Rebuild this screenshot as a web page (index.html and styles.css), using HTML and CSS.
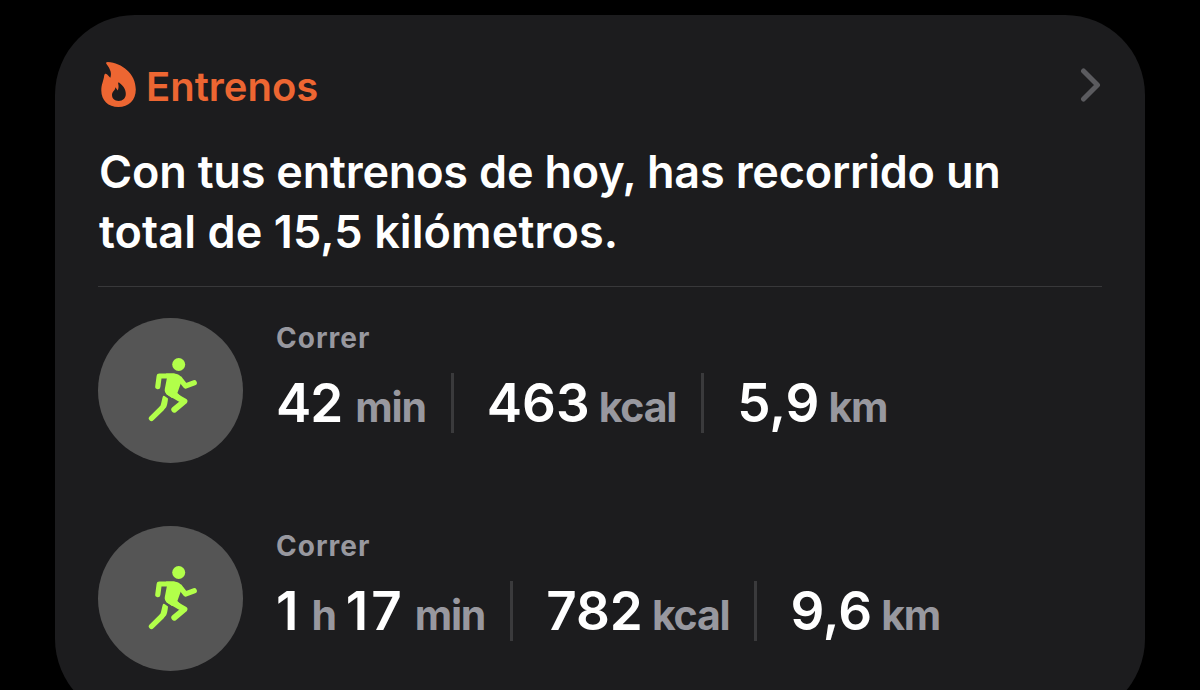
FILE: index.html
```html
<!DOCTYPE html>
<html lang="es">
<head>
  <meta charset="UTF-8">
  <title>Entrenos</title>
  <link rel="stylesheet" href="styles.css">
</head>
<body>

  <svg class="defs" width="0" height="0">
    <symbol id="runner" viewBox="0 0 90 100">
      <circle cx="48.7" cy="24.5" r="6.5" fill="currentColor"/>
      <g fill="none" stroke="currentColor" stroke-linecap="round" stroke-linejoin="round">
        <path stroke-width="5.2" d="M27.8 46.6L29.2 36H43L50 39L55.5 46L64.3 42.8"/>
        <path stroke-width="6" d="M39 52.5L54.4 61.3L44.3 69.6"/>
        <path stroke-width="5.4" d="M21.5 78.4L31.6 68.5"/>
      </g>
      <path fill="currentColor" d="M29.4 67.3Q30.6 66 31 64L32.6 57.2Q33.3 54.8 35.2 56.5L38 58.6Q37.5 65 36 67.5L33.4 70.3Z"/>
      <path fill="currentColor" d="M36 33.4H43.5C49.5 33.5 53 37.5 51.3 42L47.4 53L50.5 56L42 58L37 54.5Q34.2 52.3 34.8 49L37 37.5Z"/>
    </symbol>
  </svg>

  <div class="card">
    <div class="card-header">
      <svg class="flame" viewBox="0 0 36 46">
        <path fill="currentColor" fill-rule="evenodd" d="M5.5 2C4.6.7 5.2 0 6.8 0C21 1 34.8 11.5 34.8 27.5C34.8 38 27.8 45 17.3 45C7.3 45 .3 38.5 .3 28.5C.3 22 2.4 20 3.2 13.6C3.5 11.5 5 11.3 6.2 12.6L9.3 15.8C10.9 11.5 9.6 7.5 5.5 2ZM14.3 25.3C14.3 29 11 29.3 11 33C11 36.6 13.8 38.9 17.6 38.9C22 38.9 24.8 36.1 24.8 32C24.8 27.3 22.4 23.9 18.3 20.8C17.4 20.2 16.9 20.8 17.2 21.8C17.9 24.5 17.6 26.5 16.7 28.4C16 27.5 15.5 26.6 14.3 25.3Z"/>
      </svg>
      <span class="title">Entrenos</span>
      <svg class="chevron" viewBox="0 0 22 36">
        <path d="M3.5 4L17.5 18L3.5 32"/>
      </svg>
    </div>

    <p class="summary">Con tus entrenos de hoy, has recorrido un<br><span class="summary-end">total de 15,5 kilómetros.</span></p>

    <div class="workouts">
      <div class="workout">
        <div class="avatar"><svg class="runner"><use href="#runner"/></svg></div>
        <div class="details">
          <div class="name">Correr</div>
          <div class="metrics">
            <div class="metric time"><span class="value">42</span><span class="unit">min</span></div>
            <div class="metric energy"><span class="value">463</span><span class="unit">kcal</span></div>
            <div class="metric distance"><span class="value">5,9</span><span class="unit">km</span></div>
          </div>
        </div>
      </div>

      <div class="workout">
        <div class="avatar"><svg class="runner"><use href="#runner"/></svg></div>
        <div class="details">
          <div class="name">Correr</div>
          <div class="metrics">
            <div class="metric time long"><span class="value">1</span><span class="unit">h</span><span class="value">17</span><span class="unit">min</span></div>
            <div class="metric energy"><span class="value">782</span><span class="unit">kcal</span></div>
            <div class="metric distance"><span class="value">9,6</span><span class="unit">km</span></div>
          </div>
        </div>
      </div>
    </div>
  </div>

</body>
</html>
```
FILE: styles.css
```css
* {
  box-sizing: border-box;
}

body {
  margin: 0;
  height: 690px;
  overflow: hidden;
  background-color: #000;
  color: #fff;
  font-family: Inter, "Liberation Sans", sans-serif;
  font-weight: 600;
}

.defs {
  display: block;
}

.card {
  width: 1090px;
  height: 704px;
  margin: 15px auto 0;
  padding: 47px 43px 0;
  background-color: #1c1c1e;
  border-radius: 80px;
}

.card-header {
  display: flex;
  align-items: center;
  height: 46px;
  color: #ed6632;
}

.flame {
  width: 36px;
  height: 46px;
  margin-left: 3px;
}

.title {
  margin-left: 9px;
  padding-top: 3px;
  font-size: 40px;
  line-height: 46px;
}

.chevron {
  width: 22px;
  height: 36px;
  margin-left: auto;
  fill: none;
  stroke: #5b5b5f;
  stroke-width: 5;
  stroke-linecap: round;
  stroke-linejoin: round;
}

.summary {
  margin: 34px 0 24px 1px;
  font-size: 45px;
  line-height: 60px;
  letter-spacing: -0.2px;
  white-space: nowrap;
}

.summary-end {
  letter-spacing: 0.1px;
}

.workouts {
  padding-top: 31px;
  border-top: 1px solid #38383a;
}

.workout {
  display: flex;
  gap: 33px;
  height: 208px;
}

.avatar {
  width: 145px;
  height: 145px;
  padding: 22px 0 0 32px;
  border-radius: 50%;
  background-color: #555;
}

.runner {
  width: 90px;
  height: 100px;
  color: #b2ff4a;
}

.name {
  height: 55px;
  padding-top: 2px;
  color: #98989f;
  font-size: 28px;
  font-weight: 700;
  line-height: 36px;
  letter-spacing: 1px;
}

.metrics {
  display: flex;
}

.metric {
  display: flex;
  align-items: baseline;
  height: 60px;
  line-height: 60px;
}

.metric + .metric {
  margin-left: 25px;
  padding-left: 33px;
  border-left: 3px solid #3a3a3c;
}

.value {
  font-size: 53px;
}

.unit {
  margin-left: 9px;
  color: #98989f;
  font-size: 41px;
  font-weight: 700;
  letter-spacing: -1.2px;
}

.time .value {
  letter-spacing: -1px;
}

.time .unit {
  margin-left: 13px;
}

.long .value {
  letter-spacing: 3px;
}

.long .unit {
  margin-left: 10px;
}

.unit + .value {
  margin-left: 10px;
}
```
